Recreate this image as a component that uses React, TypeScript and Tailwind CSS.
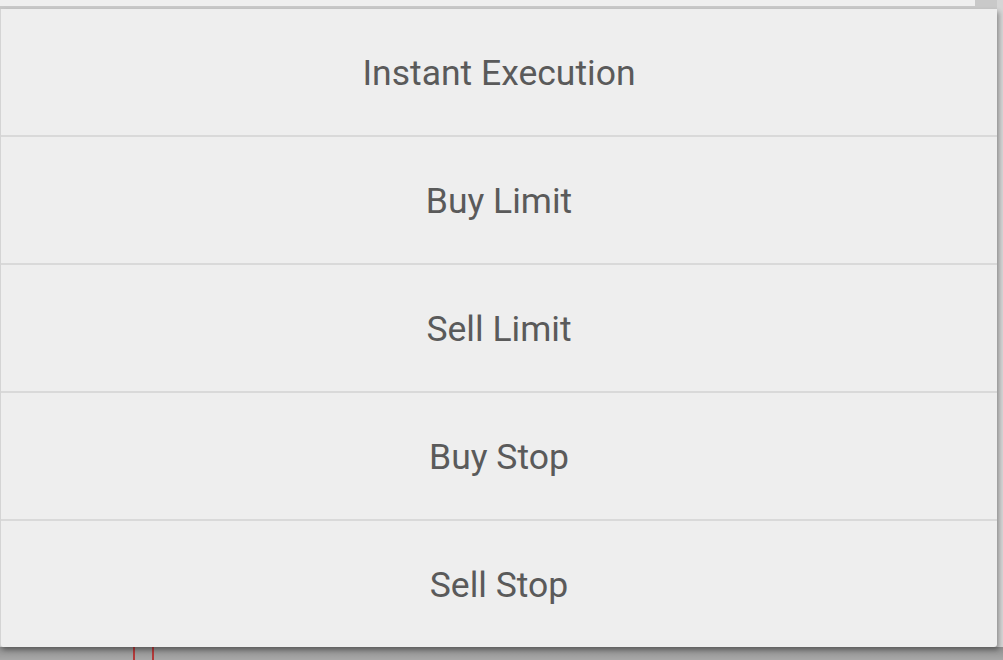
const items = ["Instant Execution", "Buy Limit", "Sell Limit", "Buy Stop", "Sell Stop"];

export default function App() {
  return (
    <div className="relative h-[660px] w-[1003px] overflow-hidden bg-[#d6d6d6]" style={{ fontFamily: "Roboto, 'Noto Sans', sans-serif" }}>
      {/* darker backdrop under the menu's bottom edge */}
      <div className="absolute bottom-0 left-0 h-[13px] w-[1003px] bg-gradient-to-b from-[#8e8e8e] to-[#a8a8a8]" />
      {/* underlying chart lines peeking out below */}
      <div className="absolute bottom-0 left-[133px] h-[13px] w-[2px] bg-[#b23a3a]" />
      <div className="absolute bottom-0 left-[152px] h-[13px] w-[2px] bg-[#b23a3a]" />

      {/* bar above the menu */}
      <div className="relative h-[9px] w-[997px] bg-[#c9c9c9]">
        <div className="h-[6px] w-[975px] bg-[#efefef]" />
      </div>

      <div className="relative w-[997px] rounded-b-[3px] border-l border-[#d4d4d4] bg-[#eeeeee] shadow-[2px_3px_5px_rgba(0,0,0,0.35)]">
        {items.map((label, i) => (
          <div
            key={label}
            className={`flex items-center justify-center pt-[4px] text-[35.5px] text-[#5a5a5a] ${i < items.length - 1 ? "h-[128px] border-b-2 border-[#d9d9d9]" : "h-[126px]"}`}
          >
            {label}
          </div>
        ))}
      </div>
    </div>
  );
}
